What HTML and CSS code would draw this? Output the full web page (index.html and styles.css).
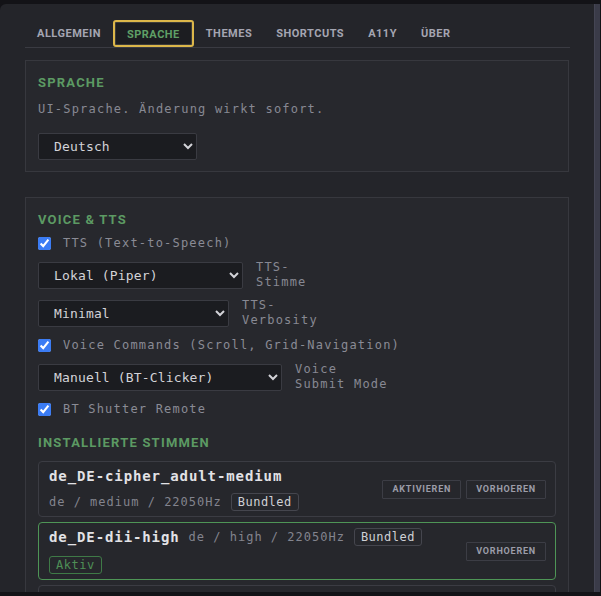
FILE: index.html
```html
<!DOCTYPE html>
<html lang="de">
<head>
<meta charset="utf-8">
<title>Einstellungen</title>
<link rel="stylesheet" href="styles.css">
</head>
<body>
<div class="frame">
  <div class="panel">
    <nav class="tabs">
      <button class="tab">Allgemein</button>
      <button class="tab tab-active">Sprache</button>
      <button class="tab">Themes</button>
      <button class="tab">Shortcuts</button>
      <button class="tab">A11y</button>
      <button class="tab">Über</button>
    </nav>

    <section class="section">
      <h2 class="section-title">Sprache</h2>
      <p class="desc">UI-Sprache. Änderung wirkt sofort.</p>
      <select class="select select-lang">
        <option>Deutsch</option>
        <option>English</option>
      </select>
    </section>

    <section class="section">
      <div class="stack">
        <h2 class="section-title stack-title">Voice &amp; TTS</h2>
        <label class="check-row"><input type="checkbox" checked><span>TTS (Text-to-Speech)</span></label>
        <div class="select-row">
          <select class="select select-voice"><option>Lokal (Piper)</option></select>
          <span class="side-label">TTS-<br>Stimme</span>
        </div>
        <div class="select-row">
          <select class="select select-verb"><option>Minimal</option></select>
          <span class="side-label">TTS-<br>Verbosity</span>
        </div>
        <label class="check-row"><input type="checkbox" checked><span>Voice Commands (Scroll, Grid-Navigation)</span></label>
        <div class="select-row">
          <select class="select select-submit"><option>Manuell (BT-Clicker)</option></select>
          <span class="side-label">Voice<br>Submit Mode</span>
        </div>
        <label class="check-row"><input type="checkbox" checked><span>BT Shutter Remote</span></label>

        <h2 class="section-title voices-title">Installierte Stimmen</h2>
        <div class="voice-list">
          <div class="voice">
            <div class="voice-info">
              <span class="voice-name">de_DE-cipher_adult-medium</span>
              <span class="voice-meta">de / medium / 22050Hz</span>
              <span class="badge">Bundled</span>
            </div>
            <div class="voice-actions">
              <button class="btn">Aktivieren</button>
              <button class="btn">Vorhoeren</button>
            </div>
          </div>
          <div class="voice voice-active">
            <div class="voice-info">
              <span class="voice-name">de_DE-dii-high</span>
              <span class="voice-meta">de / high / 22050Hz</span>
              <span class="badge">Bundled</span>
              <div class="voice-status"><span class="badge badge-active">Aktiv</span></div>
            </div>
            <div class="voice-actions">
              <button class="btn">Vorhoeren</button>
            </div>
          </div>
          <div class="voice">
            <div class="voice-info">
              <span class="voice-name">de_DE-thorsten-high</span>
              <span class="voice-meta">de / high / 22050Hz</span>
            </div>
            <div class="voice-actions">
              <button class="btn">Aktivieren</button>
              <button class="btn">Vorhoeren</button>
            </div>
          </div>
        </div>
      </div>
    </section>
  </div>
  <div class="scrollbar"></div>
</div>
</body>
</html>
```

FILE: styles.css
```css
* { box-sizing: border-box; }

html, body {
  margin: 0;
  height: 596px;
  overflow: hidden;
  background: #131317;
}

body {
  font-family: "DejaVu Sans Mono", monospace;
  color-scheme: dark;
}

.frame {
  margin-top: 4px;
  width: 600px;
  height: 588px;
  display: flex;
  overflow: hidden;
  border-radius: 6px 0 0 0;
  background: #24252a;
}

.panel {
  flex: 1;
  min-width: 0;
  padding: 16px 25px 0 25px;
  overflow: hidden;
}

.scrollbar {
  width: 6px;
  background: #3a3b48;
  border-left: 1px solid #444553;
}

/* tab strip */
.tabs {
  display: flex;
  border-bottom: 1px solid #3a3b42;
  margin-bottom: 12px;
  width: 545px;
}

.tab {
  height: 27px;
  padding: 0 11px;
  border: 1px solid transparent;
  background: none;
  font-family: Roboto, "Liberation Sans", sans-serif;
  font-weight: 700;
  font-size: 11px;
  letter-spacing: 0.5px;
  text-transform: uppercase;
  color: #a4a5b2;
  line-height: 25px;
}

.tab-active {
  border: 2px solid #dcb74a;
  border-radius: 3px;
  padding: 0 12px;
  background: #1c1d21;
  color: #5f9f66;
  box-shadow: inset 0 0 0 1px rgba(255, 240, 200, 0.15);
}

/* sections */
.section {
  border: 1px solid #37383e;
  background: #27282d;
  padding: 14px 12px 11px;
  margin-bottom: 25px;
}

.section-title {
  margin: 0;
  font-family: Roboto, "Liberation Sans", sans-serif;
  font-weight: 700;
  font-size: 13px;
  line-height: 16px;
  letter-spacing: 1.2px;
  text-transform: uppercase;
  color: #5c9a63;
}

.desc {
  margin: 10px 0 16px;
  font-size: 12px;
  line-height: 16px;
  letter-spacing: 1.2px;
  color: #878893;
}

.select {
  display: block;
  height: 27px;
  background: #1b1c20;
  border: 1px solid #3a3b42;
  border-radius: 2px;
  color: #d3d3d8;
  font-family: "DejaVu Sans Mono", monospace;
  font-size: 13px;
  letter-spacing: 0.15px;
  padding: 0 6px 0 11px;
}

.select-lang { width: 159px; }
.select-voice { width: 205px; }
.select-verb { width: 191px; }
.select-submit { width: 244px; }

.stack {
  display: flex;
  flex-direction: column;
  gap: 8px;
}

.stack-title {
  margin-bottom: -2px;
}

.check-row {
  display: flex;
  align-items: center;
  gap: 12px;
  height: 18px;
  font-size: 12px;
  letter-spacing: 1.2px;
  color: #8a8b95;
}

.check-row input {
  width: 13px;
  height: 13px;
  margin: 0;
  accent-color: #3b7cf4;
  color-scheme: light;
}

.select-row {
  display: flex;
  align-items: center;
  gap: 13px;
  height: 30px;
}

.side-label {
  font-size: 12px;
  line-height: 15px;
  letter-spacing: 1.2px;
  color: #878893;
}

.voices-title {
  margin-top: 9px;
  margin-bottom: 2px;
}

/* voice list */
.voice-list {
  display: flex;
  flex-direction: column;
  gap: 5px;
}

.voice {
  display: flex;
  align-items: center;
  gap: 10px;
  padding: 5px 9px 5px 10px;
  border: 1px solid #3b3c43;
  border-radius: 4px;
  background: #26272c;
}

.voice-active {
  border-color: #4e9556;
}

.voice-info {
  flex: 1;
  min-width: 0;
  display: flex;
  flex-wrap: wrap;
  align-items: center;
  gap: 8px 9px;
}

.voice-name {
  font-weight: 700;
  font-size: 14px;
  line-height: 18px;
  letter-spacing: 0.9px;
  color: #e2e2e6;
}

.voice-meta {
  font-size: 12px;
  line-height: 18px;
  letter-spacing: 1px;
  color: #83848e;
}

.voice-status {
  flex-basis: 100%;
  display: flex;
  margin-top: 2px;
}

.badge {
  display: inline-block;
  font-size: 12px;
  line-height: 16px;
  letter-spacing: 0.5px;
  padding: 0 6px;
  border: 1px solid #45464e;
  border-radius: 3px;
  color: #cfd0d5;
}

.badge-active {
  border-color: #3f7a47;
  color: #4f8f56;
}

.voice-actions {
  display: flex;
  gap: 5px;
}

.btn {
  height: 19px;
  padding: 0 9px;
  border: 1px solid #3c3d45;
  border-radius: 1px;
  background: transparent;
  font-family: Roboto, "Liberation Sans", sans-serif;
  font-weight: 700;
  font-size: 9px;
  letter-spacing: 0.8px;
  text-transform: uppercase;
  color: #9c9da9;
}
```
